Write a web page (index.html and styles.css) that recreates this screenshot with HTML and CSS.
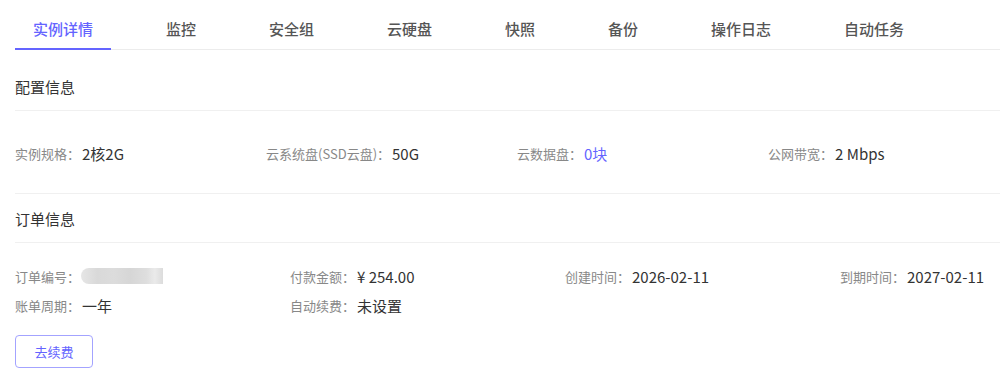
FILE: index.html
```html
<!DOCTYPE html>
<html lang="zh-CN">
<head>
<meta charset="utf-8">
<title>实例详情</title>
<link rel="stylesheet" href="styles.css">
</head>
<body>
<div class="page">
  <nav class="tabs">
    <div class="tab active">实例详情</div>
    <div class="tab">监控</div>
    <div class="tab">安全组</div>
    <div class="tab">云硬盘</div>
    <div class="tab">快照</div>
    <div class="tab">备份</div>
    <div class="tab">操作日志</div>
    <div class="tab">自动任务</div>
  </nav>

  <section class="section">
    <h3 class="section-title first">配置信息</h3>
    <div class="grid config">
      <div class="item"><span class="label">实例规格：</span><span class="value">2核2G</span></div>
      <div class="item"><span class="label">云系统盘(SSD云盘)：</span><span class="value">50G</span></div>
      <div class="item"><span class="label">云数据盘：</span><span class="value link">0块</span></div>
      <div class="item"><span class="label">公网带宽：</span><span class="value">2 Mbps</span></div>
    </div>
  </section>

  <section class="section">
    <h3 class="section-title">订单信息</h3>
    <div class="grid order">
      <div class="item"><span class="label">订单编号：</span><span class="blurred"></span></div>
      <div class="item"><span class="label">付款金额：</span><span class="value">¥ 254.00</span></div>
      <div class="item"><span class="label">创建时间：</span><span class="value">2026-02-11</span></div>
      <div class="item"><span class="label">到期时间：</span><span class="value">2027-02-11</span></div>
      <div class="item"><span class="label">账单周期：</span><span class="value">一年</span></div>
      <div class="item"><span class="label">自动续费：</span><span class="value">未设置</span></div>
    </div>
    <button class="btn">去续费</button>
  </section>
</div>
</body>
</html>
```

FILE: styles.css
```css
* { box-sizing: border-box; }
html, body { margin: 0; padding: 0; background: #fff; }
body {
  font-family: "Noto Sans CJK SC", "Noto Sans", sans-serif;
  color: #333;
  overflow: hidden;
}
.page {
  padding-left: 15px;
  width: 100%;
}
.tabs {
  display: flex;
  gap: 37px;
  height: 50px;
  border-bottom: 1px solid #ececec;
}
.tab {
  position: relative;
  padding: 19px 18px 0;
  font-size: 15px;
  line-height: 20px;
  font-weight: 500;
  color: #555;
  white-space: nowrap;
}
.tab.active { color: #6464ff; }
.tab.active::after {
  content: "";
  position: absolute;
  left: 0;
  right: 0;
  bottom: -1px;
  height: 2px;
  background: #6464ff;
}
.section-title {
  margin: 0;
  padding: 15px 0 13px;
  font-size: 15px;
  line-height: 20px;
  font-weight: 400;
  color: #333;
  border-bottom: 1px solid #f0f0f0;
}
.section-title.first { padding-top: 27px; }
.grid {
  display: grid;
  grid-template-columns: 251px 251px 251px 1fr;
}
.config {
  margin-top: 32px;
  padding-bottom: 30px;
  border-bottom: 1px solid #f0f0f0;
}
.order {
  grid-template-columns: 275px 275px 275px 1fr;
  row-gap: 9px;
  margin-top: 23px;
}
.item {
  display: flex;
  align-items: center;
  height: 20px;
  white-space: nowrap;
}
.label {
  font-size: 13px;
  color: #888;
}
.value {
  margin-left: 2px;
  font-size: 15px;
  color: #333;
}
.value.link { color: #6464ff; }
.blurred {
  display: inline-block;
  width: 82px;
  height: 16px;
  margin-left: 1px;
  border-radius: 8px 0 0 8px;
  background: linear-gradient(90deg, #e6e6e6 0%, #d9d9d9 20%, #dcdcdc 40%, #d6d6d6 60%, #dedede 80%, #eaeaea 90%, #dcdcdc 100%);
  filter: blur(0.6px);
}
.btn {
  display: block;
  margin-top: 20px;
  width: 78px;
  height: 33px;
  padding: 0;
  border: 1px solid #a3a3ff;
  border-radius: 4px;
  background: #fff;
  color: #6464ff;
  font-family: inherit;
  font-size: 13px;
  cursor: pointer;
}
```
